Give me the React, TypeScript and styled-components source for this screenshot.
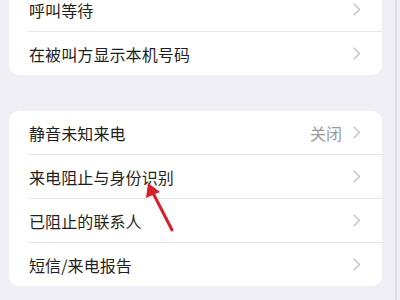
import React from "react";
import styled, { createGlobalStyle } from "styled-components";

const Global = createGlobalStyle`
  html, body { margin: 0; padding: 0; background: #f0eff5; }
  body { width: 400px; height: 300px; overflow: hidden; font-family: "Noto Sans CJK SC", "Noto Sans", sans-serif; }
`;

const Page = styled.div`
  position: relative;
  width: 400px;
  height: 300px;
  display: flex;
  flex-direction: row;
  overflow: hidden;
`;

const Column = styled.div`
  width: 373px;
  margin-left: 9px;
  margin-top: -12px;
  display: flex;
  flex-direction: column;
  gap: 36px;
`;

const EdgeBar = styled.div`
  width: 2px;
  margin-left: 13px;
  background: #dcdbe1;
`;

const Card = styled.div`
  background: #ffffff;
  border-radius: 10px;
  display: flex;
  flex-direction: column;
  overflow: hidden;
`;

const Row = styled.div<{ $last?: boolean }>`
  position: relative;
  height: 43px;
  display: flex;
  align-items: center;
  padding: 0 21px 0 20px;
  margin-bottom: ${(p) => (p.$last ? "0" : "1px")};
  &::after {
    content: "";
    display: ${(p) => (p.$last ? "none" : "block")};
    position: absolute;
    left: 19px;
    right: 0;
    bottom: -1px;
    height: 1px;
    background: #e6e6ea;
  }
`;

const Label = styled.span`
  flex: 1;
  font-size: 16px;
  color: #1f1f22;
  letter-spacing: 0.1px;
`;

const Value = styled.span`
  font-size: 16px;
  color: #9a9a9f;
  margin-right: 11px;
`;

const Chevron = () => (
  <svg width="8" height="13" viewBox="0 0 8 13" style={{ display: "block" }}>
    <path d="M1.2 1.2 L6.5 6.5 L1.2 11.8" fill="none" stroke="#c6c6cb" strokeWidth="1.6" strokeLinecap="round" strokeLinejoin="round" />
  </svg>
);

const ArrowLayer = styled.svg`
  position: absolute;
  left: 0;
  top: 0;
  pointer-events: none;
`;

type Item = { label: string; value?: string };

const group1: Item[] = [{ label: "呼叫等待" }, { label: "在被叫方显示本机号码" }];
const group2: Item[] = [
  { label: "静音未知来电", value: "关闭" },
  { label: "来电阻止与身份识别" },
  { label: "已阻止的联系人" },
  { label: "短信/来电报告" },
];

const Group = ({ items }: { items: Item[] }) => (
  <Card>
    {items.map((it, i) => (
      <Row key={it.label} $last={i === items.length - 1}>
        <Label>{it.label}</Label>
        {it.value && <Value>{it.value}</Value>}
        <Chevron />
      </Row>
    ))}
  </Card>
);

export default function App() {
  return (
    <>
      <Global />
      <Page>
        <Column>
          <Group items={group1} />
          <Group items={group2} />
        </Column>
        <EdgeBar />
        <ArrowLayer width="400" height="300" viewBox="0 0 400 300">
          <line x1="172" y1="230" x2="153" y2="193" stroke="#d8202c" strokeWidth="3" strokeLinecap="round" />
          <polygon points="148,183 146,198 160,192" fill="#d8202c" />
        </ArrowLayer>
      </Page>
    </>
  );
}
